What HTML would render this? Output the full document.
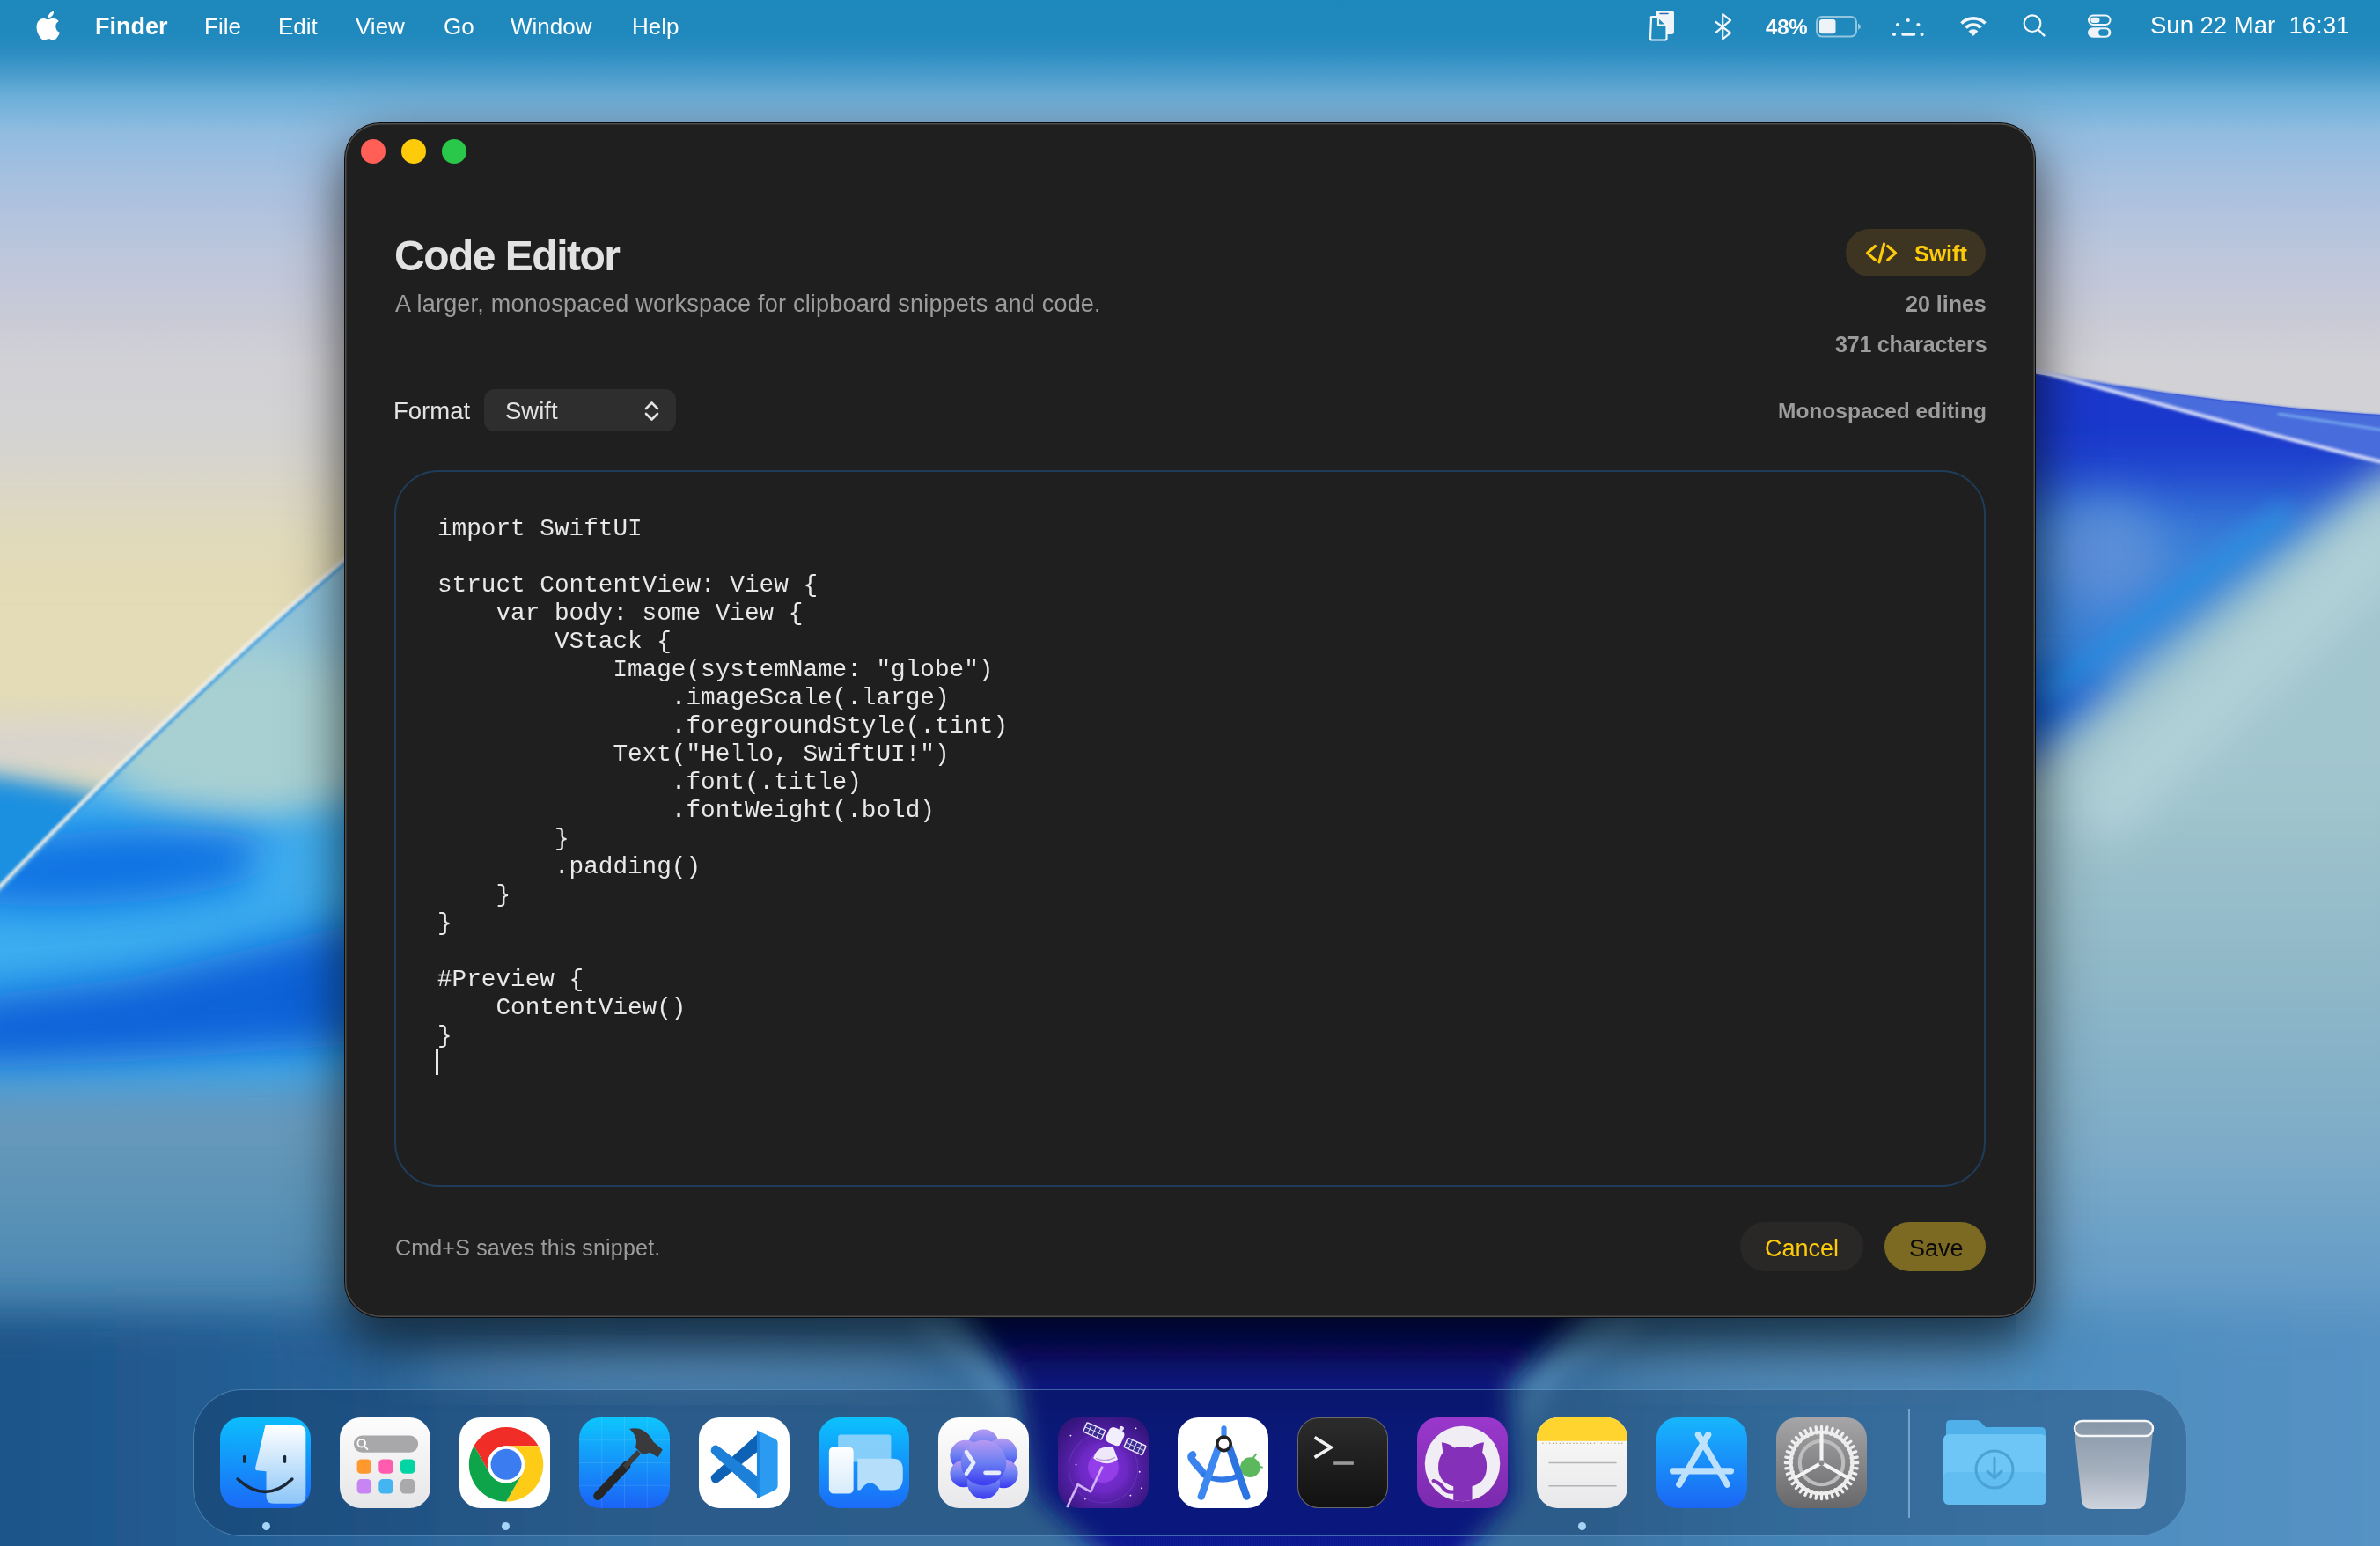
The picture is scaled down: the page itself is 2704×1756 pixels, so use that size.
<!DOCTYPE html>
<html><head><meta charset="utf-8">
<style>
html,body{margin:0;padding:0;width:2704px;height:1756px;overflow:hidden;background:#5a9ac8;}
body{position:relative;font-family:"Liberation Sans",sans-serif;}
.abs{position:absolute;}
.t,.mb,pre{will-change:transform;}
#wall{position:absolute;left:0;top:0;width:2704px;height:1756px;}
.mb{position:absolute;top:1.5px;height:56px;line-height:56px;color:#fff;font-size:26px;white-space:nowrap;}
#win{position:absolute;left:392px;top:140px;width:1920px;height:1356px;border-radius:40px;background:#1f1f1f;
 box-shadow:0 0 0 1px #0b0b0b, inset 0 0 0 1.5px #4d4d4d, 0 22px 70px rgba(0,0,0,0.5), 0 30px 50px rgba(0,0,0,0.3);}
.tl{position:absolute;top:158px;width:28px;height:28px;border-radius:50%;}
.t{position:absolute;white-space:nowrap;}
#editor{position:absolute;left:448px;top:534px;width:1808px;height:814px;box-sizing:border-box;border:2px solid #1f3d5b;border-radius:50px;}
pre{margin:0;font-family:"Liberation Mono",monospace;font-size:27.7px;line-height:32px;color:#e8e8e8;}
#dock{position:absolute;left:219px;top:1578px;width:2266px;height:167px;box-sizing:border-box;border-radius:56px;
 background:rgba(4,30,70,0.26);border:1.5px solid rgba(120,175,225,0.5);}
.ic{position:absolute;top:1610px;width:103px;height:103px;border-radius:24px;overflow:hidden;}
.dot{position:absolute;top:1729px;width:9px;height:9px;border-radius:50%;background:#a8d4f4;}
</style></head>
<body>
<svg id="wall" width="2704" height="1756" viewBox="0 0 2704 1756">
 <defs>
  <linearGradient id="sky" x1="0" y1="0" x2="0" y2="1756" gradientUnits="userSpaceOnUse">
   <stop offset="0.0000" stop-color="#1d88bb"/>
   <stop offset="0.0228" stop-color="#2089bd"/>
   <stop offset="0.0353" stop-color="#2e8ec2"/>
   <stop offset="0.0484" stop-color="#4a9dcd"/>
   <stop offset="0.0615" stop-color="#6aaed8"/>
   <stop offset="0.0849" stop-color="#90bce0"/>
   <stop offset="0.1156" stop-color="#a6c0e0"/>
   <stop offset="0.1623" stop-color="#bcc6dc"/>
   <stop offset="0.2084" stop-color="#cacbd6"/>
   <stop offset="0.2392" stop-color="#d2d2d6"/>
   <stop offset="1.0000" stop-color="#d3d2d6"/>
  </linearGradient>
  <linearGradient id="lowL" x1="0" y1="0" x2="0" y2="1756" gradientUnits="userSpaceOnUse">
   <stop offset="0.6834" stop-color="#2f70c8"/>
   <stop offset="0.7147" stop-color="#6a9cbe"/>
   <stop offset="0.7517" stop-color="#6296b8"/>
   <stop offset="0.7973" stop-color="#5690b6"/>
   <stop offset="0.8542" stop-color="#4682b0"/>
   <stop offset="0.8998" stop-color="#3470a0"/>
   <stop offset="1.0000" stop-color="#22598a"/>
  </linearGradient>
  <linearGradient id="lowR" x1="0" y1="0" x2="0" y2="1756" gradientUnits="userSpaceOnUse">
   <stop offset="0.5011" stop-color="#a2c6ce"/>
   <stop offset="0.6264" stop-color="#90b8c8"/>
   <stop offset="0.7403" stop-color="#7eacc8"/>
   <stop offset="0.8087" stop-color="#6aa0c8"/>
   <stop offset="0.8884" stop-color="#5894c4"/>
   <stop offset="1.0000" stop-color="#4e8cc2"/>
  </linearGradient>
  <linearGradient id="bot" x1="0" y1="0" x2="2704" y2="0" gradientUnits="userSpaceOnUse">
   <stop offset="0.0000" stop-color="#1c5488"/>
   <stop offset="0.1109" stop-color="#245e94"/>
   <stop offset="0.2589" stop-color="#3670a2"/>
   <stop offset="0.3698" stop-color="#3a72a2"/>
   <stop offset="0.6657" stop-color="#3a72a2"/>
   <stop offset="0.7396" stop-color="#4282b4"/>
   <stop offset="0.8506" stop-color="#4c8cbe"/>
   <stop offset="1.0000" stop-color="#5692c4"/>
  </linearGradient>
  <linearGradient id="navy" x1="0" y1="1470" x2="0" y2="1780" gradientUnits="userSpaceOnUse">
   <stop offset="0" stop-color="#040b50"/><stop offset="0.3" stop-color="#08137a"/><stop offset="0.6" stop-color="#0b1890"/><stop offset="1" stop-color="#0c1a92"/>
  </linearGradient>
  <clipPath id="belowDiag"><path d="M0 1007 Q195 803 391 636 L700 360 L700 1756 L0 1756 Z"/></clipPath>
  <clipPath id="rightC"><rect x="2290" y="0" width="500" height="1756"/></clipPath>
  <filter id="b60" x="-50%" y="-50%" width="200%" height="200%"><feGaussianBlur stdDeviation="60"/></filter>
  <filter id="b40" x="-50%" y="-50%" width="200%" height="200%"><feGaussianBlur stdDeviation="40"/></filter>
  <filter id="b25" x="-50%" y="-50%" width="200%" height="200%"><feGaussianBlur stdDeviation="25"/></filter>
  <filter id="b12" x="-50%" y="-50%" width="200%" height="200%"><feGaussianBlur stdDeviation="12"/></filter>
  <filter id="b3" x="-10%" y="-10%" width="120%" height="120%"><feGaussianBlur stdDeviation="1.5"/></filter>
  <filter id="b3s" x="-10%" y="-50%" width="120%" height="200%"><feGaussianBlur stdDeviation="2.5"/></filter>
 </defs>
 <rect width="2704" height="1756" fill="url(#sky)"/>
 <rect x="0" y="1100" width="2704" height="656" fill="#3f7cb2"/>
 <!-- LEFT: cream -->
 <path d="M-200 560 L700 560 L700 1100 L-200 1100 Z" fill="#e4dcb6" filter="url(#b60)"/>
 <ellipse cx="60" cy="848" rx="220" ry="28" fill="#d2d0dc" filter="url(#b25)" opacity="0.8"/>
 <path d="M-100 872 Q60 878 280 950 L280 1100 L-100 1100 Z" fill="#1a90e0" filter="url(#b12)"/>
 <g clip-path="url(#belowDiag)">
  <rect x="0" y="300" width="700" height="1456" fill="#3daef0"/>
  <rect x="0" y="300" width="700" height="560" fill="#90c4dc" filter="url(#b40)"/>
  <ellipse cx="280" cy="835" rx="180" ry="100" fill="#a8d0d2" filter="url(#b25)"/>
  <ellipse cx="120" cy="985" rx="200" ry="42" fill="#0a6fe2" filter="url(#b25)" transform="rotate(-4 120 985)"/>
  <ellipse cx="370" cy="990" rx="80" ry="50" fill="#40aef0" filter="url(#b25)"/>
  <path d="M-50 1135 L150 1110 L420 1045 L420 1185 L150 1205 L-50 1215 Z" fill="#0a62d8" filter="url(#b25)"/>
  <rect x="-100" y="1230" width="900" height="600" fill="url(#lowL)" filter="url(#b25)"/>
 </g>
 <path d="M-2 1014 Q197 808 393 638" stroke="#3a9ae2" stroke-width="4" fill="none" filter="url(#b3)" opacity="0.85"/>
 <path d="M-4 1011 Q195 803 395 632" stroke="#f0eee6" stroke-width="4.5" fill="none" filter="url(#b3)" opacity="0.95"/>
 <!-- RIGHT strip -->
 <g clip-path="url(#rightC)">
 <path d="M2290 421 C2400 438 2560 463 2704 471 L2760 471 L2760 1756 L2290 1756 Z" fill="#1a38cc"/>
 <path d="M2200 560 L2760 560 L2760 820 L2200 820 Z" fill="#3a82d8" filter="url(#b40)"/>
 <ellipse cx="2330" cy="820" rx="80" ry="50" fill="#0a5ad8" filter="url(#b25)"/>
 <path d="M2760 500 L2760 1756 L2200 1756 L2200 940 Z" fill="url(#lowR)" filter="url(#b25)"/>
 <path d="M2740 585 L2370 935" stroke="#b6d4da" stroke-width="70" fill="none" filter="url(#b25)" opacity="0.8"/>
 <path d="M2313 421 C2400 438 2560 463 2704 471 L2760 471 L2760 526 L2704 524 C2600 500 2450 455 2313 421 Z" fill="#4a6cdc" filter="url(#b3)"/>
 <path d="M2300 417.5 C2420 448 2560 491 2710 525.5" stroke="#cdd6f8" stroke-width="4.5" fill="none" filter="url(#b3)"/>
 <path d="M2588 470 L2710 489" stroke="#7ab2f0" stroke-width="2.5" fill="none" filter="url(#b3)"/>
 <ellipse cx="2390" cy="630" rx="70" ry="60" fill="#5a8ed8" filter="url(#b25)"/>
 <path d="M2320 790 L2600 580" stroke="#2a8ee0" stroke-width="26" fill="none" filter="url(#b12)" opacity="0.8"/>
 </g>
 <!-- bottom band -->
 <rect x="-100" y="1490" width="2904" height="400" fill="url(#bot)" filter="url(#b25)"/>
 <ellipse cx="760" cy="1556" rx="300" ry="20" fill="#5a8cb6" filter="url(#b25)"/>
 <ellipse cx="2050" cy="1556" rx="230" ry="20" fill="#5a8cb6" filter="url(#b25)"/>
 <!-- navy below window -->
 <path d="M1045 1500 L1120 1560 L1150 1610" stroke="#5c92c2" stroke-width="14" fill="none" filter="url(#b12)"/>
 <path d="M1860 1500 L1760 1560 L1735 1610" stroke="#5c92c2" stroke-width="14" fill="none" filter="url(#b12)"/>
 <path d="M1080 1470 L1820 1470 L1712 1570 L1720 1700 L1650 1780 L1270 1780 L1178 1700 L1158 1570 Z" fill="url(#navy)" filter="url(#b12)"/>
</svg>

<!-- menu bar -->
<svg class="abs" style="left:41px;top:13px" width="27" height="32" viewBox="0 0 27 32"><path fill="#fff" d="M22.3 17c0-4 3.3-5.9 3.4-6-1.9-2.7-4.8-3.1-5.8-3.1-2.5-.3-4.8 1.4-6.1 1.4-1.3 0-3.2-1.4-5.3-1.3C5.8 8 3.3 9.600 1.900 12.100c-2.9 5-.7 12.400 2.100 16.400 1.4 2 3 4.200 5.100 4.100 2.100-.1 2.800-1.300 5.300-1.300 2.500 0 3.100 1.300 5.300 1.300 2.200 0 3.600-2 4.900-4 1.600-2.300 2.200-4.500 2.300-4.600-.1 0-4.500-1.700-4.600-6.900zM18.300 5.100c1.100-1.400 1.900-3.300 1.700-5.100-1.600.1-3.600 1.100-4.700 2.400-1 1.200-1.900 3.100-1.700 4.900 1.800.1 3.600-.9 4.700-2.200z"/></svg>
<div class="mb" style="left:108px;font-weight:bold;font-size:27px;">Finder</div>
<div class="mb" style="left:232px;">File</div>
<div class="mb" style="left:316px;">Edit</div>
<div class="mb" style="left:404px;">View</div>
<div class="mb" style="left:504px;">Go</div>
<div class="mb" style="left:580px;">Window</div>
<div class="mb" style="left:718px;">Help</div>
<svg class="abs" style="left:1860px;top:0px" width="560" height="56" viewBox="1860 0 560 56">
 <g fill="none" stroke="#f2f6fa" stroke-width="2.2" stroke-linecap="round" stroke-linejoin="round">
  <!-- clipboard -->
  <rect x="1881" y="12" width="21" height="27" rx="3" fill="#eef3f8" stroke="none"/>
  <path d="M1886 15.5 H1895" stroke="#2a6ab0" stroke-width="1.6"/>
  <path d="M1876 20 Q1875 19 1877 19 L1884 19 L1893.5 28.5 L1893.5 43.5 Q1893.5 45.5 1891.5 45.5 L1877 45.5 Q1875 45.5 1875 43.5 Z" fill="#1f8bbd"/>
  <path d="M1884 19 L1884 28.5 L1893.5 28.5"/>
  <!-- bluetooth -->
  <path d="M1949.5 25 L1966 37.3 L1957.2 44.5 L1957.2 16 L1966 23.2 L1949.5 36.8"/>
  <!-- battery -->
  <rect x="2064" y="19" width="45" height="22.5" rx="6" stroke="rgba(240,246,250,0.55)" stroke-width="2"/>
  <rect x="2067" y="22" width="18.5" height="16.2" rx="3" fill="#eef3f8" stroke="none"/>
  <path d="M2111 26.5 Q2114 28 2114 30.3 Q2114 32.6 2111 34" fill="rgba(240,246,250,0.55)" stroke="none"/>
  <!-- focus dots -->
  <g fill="#eef3f8" stroke="none"><circle cx="2167.8" cy="23" r="2.1"/><circle cx="2156" cy="28" r="2.1"/><circle cx="2179.4" cy="28" r="2.1"/><circle cx="2152" cy="39" r="2.1"/><circle cx="2183.6" cy="39" r="2.1"/></g>
  <path d="M2162 39 H2174.5" stroke-width="3.6"/>
  <!-- wifi -->
  <path d="M2228.5 26.5 A19 19 0 0 1 2255.5 26.5" stroke-width="3.6" stroke-linecap="butt"/>
  <path d="M2233.5 31.6 A12 12 0 0 1 2250.5 31.6" stroke-width="3.6" stroke-linecap="butt"/>
  <path d="M2241.9 41 L2236.5 35.6 A7.6 7.6 0 0 1 2247.3 35.6 Z" fill="#eef3f8" stroke="none"/>
  <!-- search -->
  <circle cx="2309" cy="26.7" r="9.3"/>
  <path d="M2315.8 33.6 L2322.5 40.4" stroke-width="2.4"/>
  <!-- control center -->
  <rect x="2373" y="17.6" width="24.5" height="10.5" rx="5.25" stroke-width="2"/>
  <rect x="2375.3" y="19.8" width="10.2" height="6.1" rx="3" fill="#eef3f8" stroke="none"/>
  <rect x="2372" y="31.2" width="26.4" height="11.6" rx="5.8" fill="#eef3f8" stroke="none"/>
  <rect x="2384.2" y="33.3" width="11.3" height="7.4" rx="3.7" fill="#1f8bbd" stroke="none"/>
 </g>
</svg>
<div class="mb" style="left:2006px;top:2.5px;font-size:24px;font-weight:bold;letter-spacing:-0.2px;">48%</div>
<div class="mb" style="left:2443px;top:1px;font-size:27.5px;">Sun 22 Mar&nbsp;&nbsp;16:31</div>

<!-- window -->
<div id="win"></div>
<div class="tl" style="left:410px;background:#ff5f57;"></div>
<div class="tl" style="left:456px;background:#fecb0a;"></div>
<div class="tl" style="left:502px;background:#2ac84a;"></div>

<div class="t" style="left:448px;top:263px;font-size:48px;letter-spacing:-1.5px;font-weight:bold;color:#e2e2e2;">Code Editor</div>
<div class="t" style="left:449px;top:330px;font-size:27px;letter-spacing:0.22px;color:#9c9c9c;">A larger, monospaced workspace for clipboard snippets and code.</div>

<div class="abs" style="left:2097px;top:260px;width:159px;height:54px;border-radius:27px;background:#3d3522;"></div>
<svg class="abs" style="left:2110px;top:270px" width="55" height="35" viewBox="2110 270 55 35"><g fill="none" stroke="#fecb0a" stroke-width="3.2" stroke-linecap="round" stroke-linejoin="round"><path d="M2130.4 279.5 L2121.5 287.4 L2130.4 295.3"/><path d="M2144.7 279.5 L2153.6 287.4 L2144.7 295.3"/><path d="M2140.6 277 L2135 297.8"/></g></svg>
<div class="t" style="left:2175px;top:274px;font-size:25px;font-weight:bold;color:#fecb0a;">Swift</div>
<div class="t" style="right:447px;top:331px;font-size:25px;font-weight:bold;color:#9c9c9c;">20 lines</div>
<div class="t" style="right:447px;top:377px;font-size:25px;letter-spacing:-0.2px;font-weight:bold;color:#9c9c9c;">371 characters</div>

<div class="t" style="left:447px;top:451px;font-size:27.5px;color:#e2e2e2;">Format</div>
<div class="abs" style="left:550px;top:442px;width:218px;height:48px;border-radius:12px;background:#2e2e2e;"></div>
<div class="t" style="left:574px;top:451px;font-size:27.5px;color:#e2e2e2;">Swift</div>
<svg class="abs" style="left:728px;top:452px" width="25" height="30" viewBox="728 452 25 30"><g fill="none" stroke="#e4e4e4" stroke-width="2.6" stroke-linecap="round" stroke-linejoin="round"><path d="M734 464 L740.5 457.5 L747 464"/><path d="M734 470 L740.5 476.5 L747 470"/></g></svg>
<div class="t" style="right:447px;top:453px;font-size:24.5px;font-weight:bold;color:#9c9c9c;">Monospaced editing</div>

<div id="editor"></div>
<pre class="abs" style="left:497px;top:585px;">import SwiftUI

struct ContentView: View {
    var body: some View {
        VStack {
            Image(systemName: "globe")
                .imageScale(.large)
                .foregroundStyle(.tint)
            Text("Hello, SwiftUI!")
                .font(.title)
                .fontWeight(.bold)
        }
        .padding()
    }
}

#Preview {
    ContentView()
}
</pre>
<div class="abs" style="left:495px;top:1191px;width:3px;height:30px;background:#e8e8e8;"></div>

<div class="t" style="left:449px;top:1403px;font-size:25px;letter-spacing:0.19px;color:#9c9c9c;">Cmd+S saves this snippet.</div>
<div class="abs" style="left:1977px;top:1388px;width:140px;height:56px;border-radius:28px;background:#2a2826;"></div>
<div class="t" style="left:2005px;top:1402.5px;font-size:27px;color:#fecb0a;">Cancel</div>
<div class="abs" style="left:2141px;top:1388px;width:115px;height:56px;border-radius:28px;background:#7d6a22;"></div>
<div class="t" style="left:2169px;top:1402.5px;font-size:27px;color:#0a0a0a;">Save</div>

<!-- dock -->
<div id="dock"></div>
<!-- DOCKICONS -->
<svg class="abs" style="left:250px;top:1610px" width="103" height="103" viewBox="0 0 100 100"><defs><linearGradient id="fi0" x1="0" y1="0" x2="0" y2="1"><stop offset="0" stop-color="#0cbdfd"/><stop offset="1" stop-color="#1b6af7"/></linearGradient>
<linearGradient id="fi0b" x1="0" y1="0" x2="0" y2="1"><stop offset="0" stop-color="#ffffff"/><stop offset="1" stop-color="#8cc6f8"/></linearGradient></defs>
<rect x="0" y="0" width="100" height="100" rx="23" ry="23" fill="url(#fi0)"/>
<path d="M50 8.5 L86 8.5 Q94.5 8.5 94.5 17 L94.5 86 Q94.5 95 86 95 L59 95 Q51 95 51 87 L51 59.5 L41 58.5 Q38.5 58 39 55 Z" fill="url(#fi0b)"/>
<rect x="25.2" y="41.5" width="3.2" height="9" rx="1.6" fill="#1b2838"/>
<rect x="69.8" y="41.5" width="3.2" height="9" rx="1.6" fill="#1b2838"/>
<path d="M19.5 68 Q50 96 79.5 68" stroke="#1b2838" stroke-width="3.4" fill="none" stroke-linecap="round"/></svg>
<svg class="abs" style="left:386px;top:1610px" width="103" height="103" viewBox="0 0 100 100"><defs><linearGradient id="fi1" x1="0" y1="0" x2="0" y2="1"><stop offset="0" stop-color="#fdfdfd"/><stop offset="1" stop-color="#e6e6e8"/></linearGradient></defs>
<rect x="0" y="0" width="100" height="100" rx="23" ry="23" fill="url(#fi1)"/>
<rect x="15.5" y="20" width="71" height="18.5" rx="9.2" fill="#a8a8aa"/>
<circle cx="24" cy="28.3" r="4.2" stroke="#fff" stroke-width="1.8" fill="none"/><path d="M27 31.5 L30.5 35" stroke="#fff" stroke-width="1.8" stroke-linecap="round"/>
<rect x="19" y="46" width="16" height="16" rx="4.5" fill="#ff982f"/>
<rect x="43" y="46" width="16" height="16" rx="4.5" fill="#ff5caf"/>
<rect x="67" y="46" width="16" height="16" rx="4.5" fill="#00d5a3"/>
<rect x="19" y="68" width="16" height="16" rx="4.5" fill="#c685f2"/>
<rect x="43" y="68" width="16" height="16" rx="4.5" fill="#44b5f1"/>
<rect x="67" y="68" width="16" height="16" rx="4.5" fill="#a9a9ab"/></svg>
<svg class="abs" style="left:522px;top:1610px" width="103" height="103" viewBox="0 0 100 100"><rect x="0" y="0" width="100" height="100" rx="23" ry="23" fill="#ffffff"/><path d="M33.75 62.05 L15.99 31.30 A41 41 0 0 1 87.01 31.30 L51.50 31.30 A20.5 20.5 0 0 0 33.75 62.05 Z" fill="#f12d27"/><path d="M51.50 31.30 L87.01 31.30 A41 41 0 0 1 51.50 92.80 L69.25 62.05 A20.5 20.5 0 0 0 51.50 31.30 Z" fill="#fecb17"/><path d="M69.25 62.05 L51.50 92.80 A41 41 0 0 1 15.99 31.30 L33.75 62.05 A20.5 20.5 0 0 0 69.25 62.05 Z" fill="#0ea449"/><circle cx="51.5" cy="51.8" r="20.5" fill="#fff"/><circle cx="51.5" cy="51.8" r="17" fill="#3b7cf0"/></svg>
<svg class="abs" style="left:658px;top:1610px" width="103" height="103" viewBox="0 0 100 100"><defs><linearGradient id="fi3" x1="0" y1="0" x2="0" y2="1"><stop offset="0" stop-color="#0ec5fd"/><stop offset="1" stop-color="#1b63f6"/></linearGradient></defs>
<rect x="0" y="0" width="100" height="100" rx="23" ry="23" fill="url(#fi3)"/>
<g stroke="#ffffff" stroke-opacity="0.13" stroke-width="0.8"><path d="M25 0V100M50 0V100M75 0V100M0 25H100M0 50H100M0 75H100"/></g>
<path d="M20.5 86.5 L52 53" stroke="#262626" stroke-width="9.5" stroke-linecap="round"/>
<path d="M50 55 L66 38" stroke="#3c3c3c" stroke-width="6"/>
<path d="M55.5 12.6 Q73 9 82 27 L92 35.5 L87 44 L78 38.5 L70 41 L62 33 Q66 22 55.5 12.6 Z" fill="#3a3a3c"/></svg>
<svg class="abs" style="left:794px;top:1610px" width="103" height="103" viewBox="0 0 100 100"><rect x="0" y="0" width="100" height="100" rx="23" ry="23" fill="#ffffff"/>
<path d="M67 36 L22 71 Q17.5 74 14.5 70.5 L13.5 68 Q12.5 65 15.5 62.5 L67 16 Z" fill="#0e62b5"/>
<path d="M67 67 L22 32 Q17.5 29 14.5 32.5 L13.5 35 Q12.5 38 15.5 40.5 L67 87.5 Z" fill="#1c80d8"/>
<path d="M64 14 L84 23.5 Q87 25 87 28.5 V75 Q87 78.5 84 80 L64 89.5 Q67 87 67 83 V19 Q67 16 64 14 Z" fill="#2a9bf0"/>
<path d="M67 16 L67 87.5 L64 89.5 L64 14 Z" fill="#1f86e0"/></svg>
<svg class="abs" style="left:930px;top:1610px" width="103" height="103" viewBox="0 0 100 100"><defs><linearGradient id="fi5" x1="0" y1="0" x2="0" y2="1"><stop offset="0" stop-color="#0cc2fd"/><stop offset="1" stop-color="#1b6bf7"/></linearGradient>
<linearGradient id="fi5b" x1="0" y1="0" x2="0" y2="1"><stop offset="0" stop-color="#ffffff"/><stop offset="1" stop-color="#d6ebfb"/></linearGradient></defs>
<rect x="0" y="0" width="100" height="100" rx="23" ry="23" fill="url(#fi5)"/>
<rect x="21.5" y="19" width="58.5" height="30" rx="3" fill="#9ad6f9" opacity="0.85"/>
<path d="M43 45.5 L82 45.5 Q93 45.5 93 58 L93 66 Q93 80 82 80 L68 80 Q62 72 57 72 Q52 72 46 80 L43 80 Z" fill="#b4defa"/>
<rect x="11.5" y="32.5" width="27" height="51.5" rx="5" fill="url(#fi5b)"/></svg>
<svg class="abs" style="left:1066px;top:1610px" width="103" height="103" viewBox="0 0 100 100"><defs><linearGradient id="fi6" x1="0" y1="0" x2="0" y2="1"><stop offset="0" stop-color="#fefefe"/><stop offset="1" stop-color="#e8e8ea"/></linearGradient>
<linearGradient id="fi6b" x1="0" y1="0" x2="0" y2="1"><stop offset="0" stop-color="#b89af2"/><stop offset="0.5" stop-color="#6a7ef2"/><stop offset="1" stop-color="#3a3af0"/></linearGradient></defs>
<rect x="0" y="0" width="100" height="100" rx="23" ry="23" fill="url(#fi6)"/>
<g fill="url(#fi6b)"><circle cx="50" cy="30" r="17"/><circle cx="30" cy="42" r="17"/><circle cx="70" cy="40" r="17"/><circle cx="28" cy="62" r="15"/><circle cx="72" cy="62" r="16"/><circle cx="50" cy="72" r="18"/><circle cx="50" cy="50" r="25"/></g>
<path d="M31 38 L39 50 L31 62" stroke="#e6ecfc" stroke-width="4.5" fill="none" stroke-linecap="round" stroke-linejoin="round"/>
<path d="M52 61 H67" stroke="#e6ecfc" stroke-width="4.5" stroke-linecap="round"/></svg>
<svg class="abs" style="left:1202px;top:1610px" width="103" height="103" viewBox="0 0 100 100"><defs><radialGradient id="fi7" cx="0.5" cy="0.56" r="0.62"><stop offset="0" stop-color="#a43cf4"/><stop offset="0.3" stop-color="#7a2ad2"/><stop offset="0.6" stop-color="#5520a6"/><stop offset="1" stop-color="#34157c"/></radialGradient></defs>
<rect x="0" y="0" width="100" height="100" rx="23" ry="23" fill="url(#fi7)"/>
<circle cx="50" cy="56" r="38" fill="none" stroke="#6a34c0" stroke-width="1.2" opacity="0.7"/>
<circle cx="50" cy="56" r="28" fill="#6c2cc4" opacity="0.55"/>
<circle cx="50" cy="55" r="17" fill="#9a42ee" opacity="0.8"/>
<g fill="#fff"><circle cx="14" cy="20" r="0.9"/><circle cx="86" cy="12" r="0.9"/><circle cx="90" cy="60" r="0.9"/><circle cx="20" cy="52" r="0.9"/><circle cx="80" cy="86" r="0.9"/><circle cx="30" cy="90" r="0.8"/><circle cx="92" cy="78" r="0.8"/></g>
<path d="M49 54 L36 82 L22 74 L10 99" stroke="#d2b2f6" stroke-width="2.6" fill="none"/>
<g transform="rotate(24 40 15)"><rect x="29" y="9.5" width="22" height="11" rx="1" fill="#3a2c90" stroke="#ece4ff" stroke-width="1.4"/><path d="M34.5 9.5V20.5M40 9.5V20.5M45.5 9.5V20.5M29 15H51" stroke="#ece4ff" stroke-width="0.9"/></g>
<g transform="rotate(24 85 32)"><rect x="74" y="26.5" width="22" height="11" rx="1" fill="#3a2c90" stroke="#ece4ff" stroke-width="1.4"/><path d="M79.5 26.5V37.5M85 26.5V37.5M90.5 26.5V37.5M74 32H96" stroke="#ece4ff" stroke-width="0.9"/></g>
<g transform="rotate(24 63 21)"><rect x="54" y="12" width="18" height="18" rx="5" fill="#f2eefc"/><circle cx="66" cy="10" r="2.5" fill="#e8e2f6"/></g>
<path d="M39 45 Q43 30 61 33 L66 46 Q53 56 39 45 Z" fill="#eee8fa"/>
<path d="M42 45 Q52 50 63 44" stroke="#b89ae0" stroke-width="1.5" fill="none"/></svg>
<svg class="abs" style="left:1338px;top:1610px" width="103" height="103" viewBox="0 0 100 100"><rect x="0" y="0" width="100" height="100" rx="23" ry="23" fill="#ffffff"/>
<circle cx="80" cy="55" r="11" fill="#5cb85c"/><path d="M83 45 L87 40 M88 54 L94 55" stroke="#5cb85c" stroke-width="2"/>
<path d="M16.5 41 Q13 43 17 48 L29 62" stroke="#3a82ee" stroke-width="8" stroke-linecap="round" fill="none"/>
<path d="M26 62 Q50 75 71 62" stroke="#2f78e6" stroke-width="6" fill="none"/>
<path d="M46 30 L26 87" stroke="#3d88f0" stroke-width="8" stroke-linecap="round"/>
<path d="M56 30 L76 87" stroke="#2c74e0" stroke-width="8" stroke-linecap="round"/>
<path d="M51 12 V30" stroke="#3d88f0" stroke-width="6" stroke-linecap="round"/>
<circle cx="51" cy="29" r="7.5" fill="#fff" stroke="#222" stroke-width="3.5"/></svg>
<svg class="abs" style="left:1474px;top:1610px" width="103" height="103" viewBox="0 0 100 100"><defs><linearGradient id="fi9" x1="0" y1="0" x2="0" y2="1"><stop offset="0" stop-color="#2c2c2c"/><stop offset="1" stop-color="#111111"/></linearGradient></defs>
<rect x="0.5" y="0.5" width="99" height="99" rx="23" fill="url(#fi9)" stroke="#6a6a6a" stroke-width="1"/>
<path d="M19 22 L37 33 L19 44" stroke="#f0f0f0" stroke-width="3.6" fill="none" stroke-linejoin="miter"/>
<path d="M40 50.5 H62" stroke="#9a9a9a" stroke-width="3.5"/></svg>
<svg class="abs" style="left:1610px;top:1610px" width="103" height="103" viewBox="0 0 100 100"><defs><linearGradient id="fi10" x1="0" y1="0" x2="0" y2="1"><stop offset="0" stop-color="#9a38cc"/><stop offset="1" stop-color="#7a2aae"/></linearGradient></defs>
<rect x="0" y="0" width="100" height="100" rx="23" ry="23" fill="url(#fi10)"/>
<circle cx="50" cy="51" r="41.5" fill="#f0eef4"/>
<clipPath id="gh"><circle cx="50" cy="51" r="41.5"/></clipPath>
<g clip-path="url(#gh)"><path d="M40 96 L40 76 Q25 72 23.5 58 Q22.5 46 28.5 38.5 L27 27.5 Q35 28.5 41 33.5 Q50 31 59 33.5 Q65 28.5 73.8 27.5 L72 38.5 Q78 46 76.5 58 Q75 72 60.7 76 L60.7 96 Z" fill="#8430b8"/>
<path d="M18 70 Q25 72 29 78 Q33 83 40 82" stroke="#8430b8" stroke-width="4" fill="none" stroke-linecap="round"/></g></svg>
<svg class="abs" style="left:1746px;top:1610px" width="103" height="103" viewBox="0 0 100 100"><defs><linearGradient id="fi11" x1="0" y1="0" x2="0" y2="1"><stop offset="0" stop-color="#fbfbfb"/><stop offset="1" stop-color="#e8e8ea"/></linearGradient>
<clipPath id="ci11"><rect x="0" y="0" width="100" height="100" rx="23"/></clipPath></defs>
<g clip-path="url(#ci11)"><rect width="100" height="100" fill="url(#fi11)"/><rect width="100" height="26" fill="#ffd42f"/>
<path d="M6 28.5 H96" stroke="#b8a870" stroke-width="1.2" stroke-dasharray="1.2 2.6"/></g>
<path d="M13 50 H88 M13 75.5 H88" stroke="#b4b4b6" stroke-width="1.6"/></svg>
<svg class="abs" style="left:1882px;top:1610px" width="103" height="103" viewBox="0 0 100 100"><defs><linearGradient id="fi12" x1="0" y1="0" x2="0" y2="1"><stop offset="0" stop-color="#17b6fd"/><stop offset="1" stop-color="#1b66f4"/></linearGradient></defs>
<rect x="0" y="0" width="100" height="100" rx="23" ry="23" fill="url(#fi12)"/>
<g stroke="#c6e6fd" stroke-width="7" stroke-linecap="round" opacity="0.95"><path d="M46 19 L78 74"/><path d="M57 19 L25 74"/><path d="M18 59 H82"/></g></svg>
<svg class="abs" style="left:2018px;top:1610px" width="103" height="103" viewBox="0 0 100 100"><defs><linearGradient id="fi13" x1="0" y1="0" x2="0" y2="1"><stop offset="0" stop-color="#a6a6a8"/><stop offset="1" stop-color="#68686a"/></linearGradient></defs>
<rect x="0" y="0" width="100" height="100" rx="23" ry="23" fill="url(#fi13)"/>
<path d="M83.00 50.00 L90.00 50.00 M82.59 55.16 L89.51 56.26 M81.38 60.20 L88.04 62.36 M79.40 64.98 L85.64 68.16 M76.70 69.40 L82.36 73.51 M73.33 73.33 L78.28 78.28 M69.40 76.70 L73.51 82.36 M64.98 79.40 L68.16 85.64 M60.20 81.38 L62.36 88.04 M55.16 82.59 L56.26 89.51 M50.00 83.00 L50.00 90.00 M44.84 82.59 L43.74 89.51 M39.80 81.38 L37.64 88.04 M35.02 79.40 L31.84 85.64 M30.60 76.70 L26.49 82.36 M26.67 73.33 L21.72 78.28 M23.30 69.40 L17.64 73.51 M20.60 64.98 L14.36 68.16 M18.62 60.20 L11.96 62.36 M17.41 55.16 L10.49 56.26 M17.00 50.00 L10.00 50.00 M17.41 44.84 L10.49 43.74 M18.62 39.80 L11.96 37.64 M20.60 35.02 L14.36 31.84 M23.30 30.60 L17.64 26.49 M26.67 26.67 L21.72 21.72 M30.60 23.30 L26.49 17.64 M35.02 20.60 L31.84 14.36 M39.80 18.62 L37.64 11.96 M44.84 17.41 L43.74 10.49 M50.00 17.00 L50.00 10.00 M55.16 17.41 L56.26 10.49 M60.20 18.62 L62.36 11.96 M64.98 20.60 L68.16 14.36 M69.40 23.30 L73.51 17.64 M73.33 26.67 L78.28 21.72 M76.70 30.60 L82.36 26.49 M79.40 35.02 L85.64 31.84 M81.38 39.80 L88.04 37.64 M82.59 44.84 L89.51 43.74" stroke="#f0f0f0" stroke-width="3.2" stroke-linecap="round"/>
<circle cx="50" cy="50" r="34" fill="none" stroke="#ececec" stroke-width="4"/>
<circle cx="50" cy="50" r="24" fill="none" stroke="#bdbdbd" stroke-width="4"/>
<g stroke="#f4f4f4" stroke-width="4" stroke-linecap="round"><path d="M50 50 L50 17"/><path d="M50 50 L22 66"/><path d="M50 50 L78 66"/></g>
<circle cx="50" cy="50" r="3" fill="#888"/></svg>
<div class="abs" style="left:2168px;top:1600px;width:2px;height:124px;background:rgba(170,210,240,0.55);"></div>
<svg class="abs" style="left:2207px;top:1612px" width="118" height="100" viewBox="0 0 118 100">
<path d="M4 6 Q4 1 9 1 L38 1 Q42 1 45 5 L49 9 L112 9 Q117 9 117 14 L117 30 L4 30 Z" fill="#4fb0ea"/>
<rect x="1" y="17" width="117" height="80" rx="6" fill="#6ec6f6"/>
<rect x="1" y="60" width="117" height="37" rx="6" fill="#5ab8ee" opacity="0.6"/>
<circle cx="59" cy="57" r="21" fill="none" stroke="#4aa2d6" stroke-width="3"/>
<path d="M59 44 V66 M51 59 L59 67 L67 59" stroke="#4aa2d6" stroke-width="3" fill="none" stroke-linecap="round"/></svg>
<svg class="abs" style="left:2354px;top:1612px" width="95" height="105" viewBox="0 0 95 105">
<defs><linearGradient id="tr" x1="0" y1="0" x2="0" y2="1"><stop offset="0" stop-color="#8e9aa8"/><stop offset="0.6" stop-color="#b2b8c2"/><stop offset="1" stop-color="#dcdde2"/></linearGradient></defs>
<path d="M3 14 Q3 2 15 2 L80 2 Q92 2 92 14 L84 92 Q83 102 72 102 L23 102 Q12 102 11 92 Z" fill="url(#tr)" opacity="0.92"/>
<rect x="3" y="2" width="89" height="17" rx="8.5" fill="none" stroke="#f4f6f8" stroke-width="2.5"/></svg>
<div class="abs" style="left:298px;top:1729px;width:9px;height:9px;border-radius:50%;background:#a6d4f6;"></div>
<div class="abs" style="left:570px;top:1729px;width:9px;height:9px;border-radius:50%;background:#a6d4f6;"></div>
<div class="abs" style="left:1793px;top:1729px;width:9px;height:9px;border-radius:50%;background:#a6d4f6;"></div>
<!-- /DOCKICONS -->
</body></html>
